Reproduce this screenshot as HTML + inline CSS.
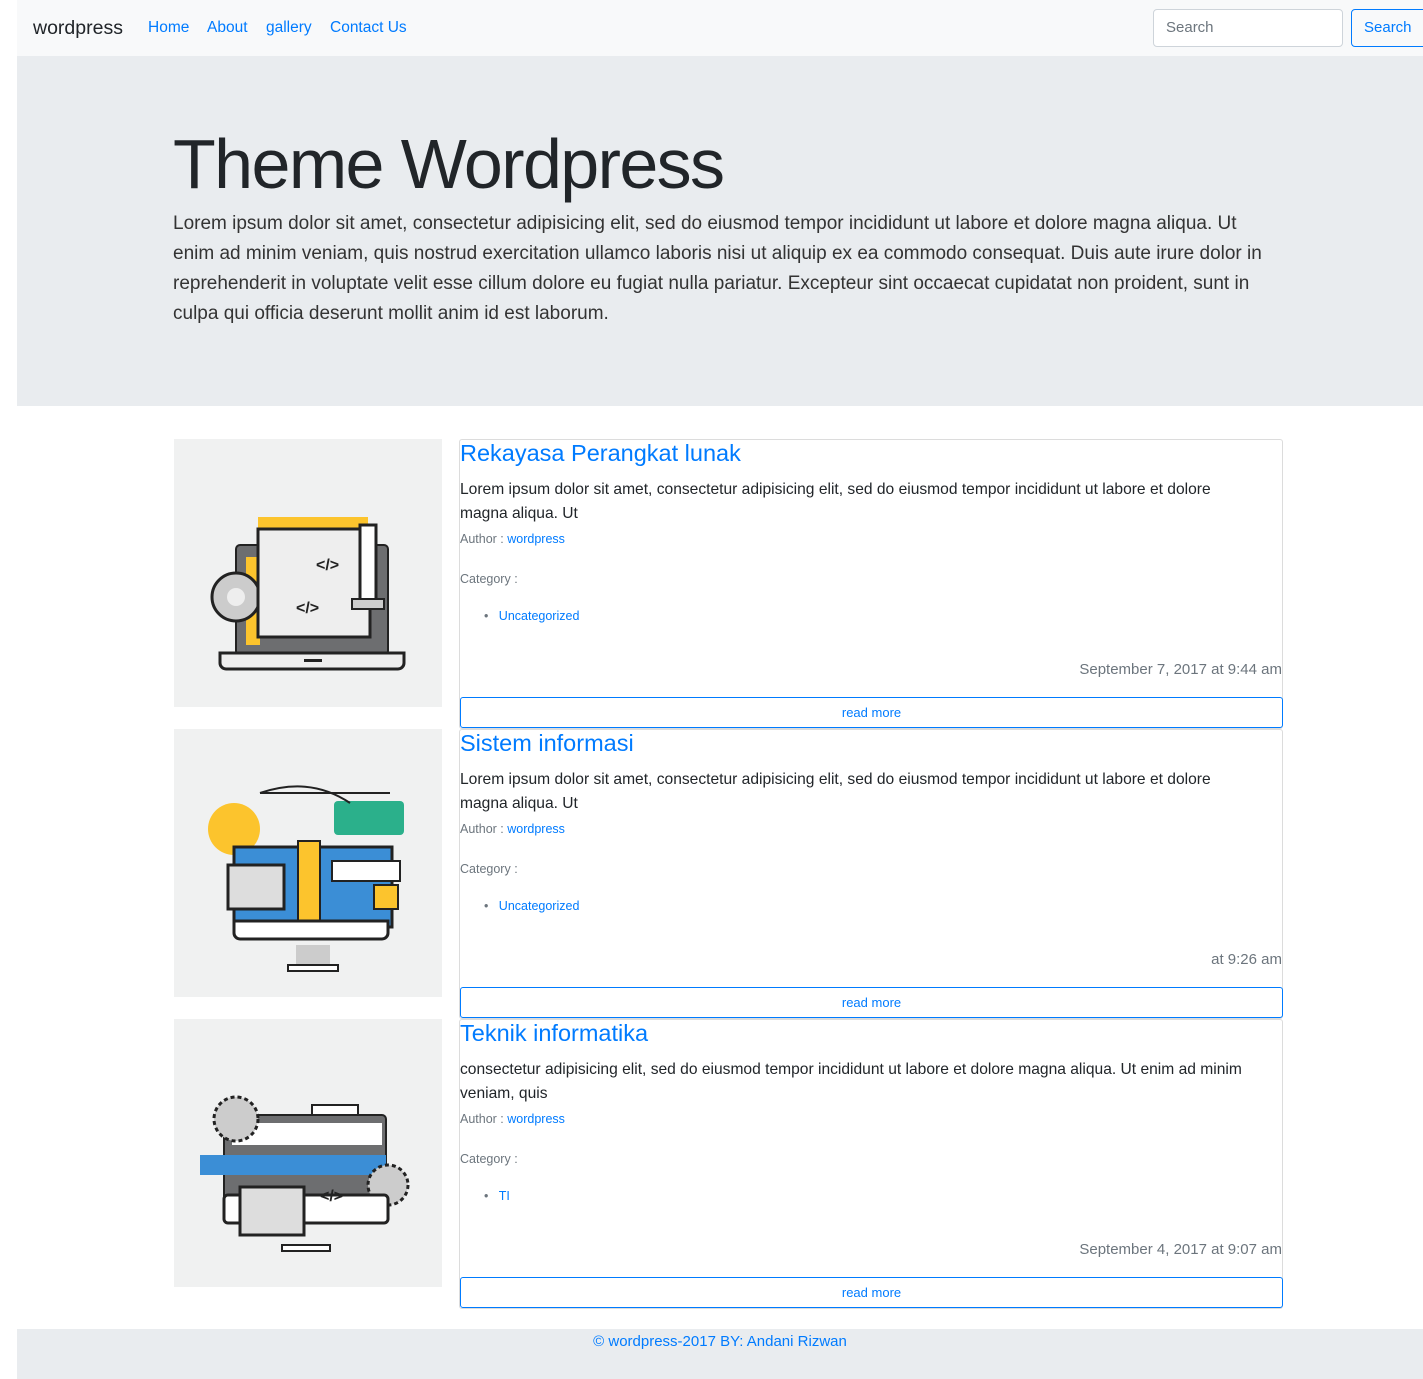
<!DOCTYPE html>
<html><head><style>
*{box-sizing:border-box;margin:0;padding:0}
body{width:1423px;height:1379px;background:#fff;font-family:"Liberation Sans",sans-serif;color:#212529;position:relative;overflow:hidden}
.a{position:absolute}
a{color:#007bff;text-decoration:none}
.nav{left:17px;top:0;width:1406px;height:56px;background:#f8f9fa}
.jum{left:17px;top:56px;width:1406px;height:350px;background:#e9ecef}
.img{background:#f0f1f1;width:268px;height:268px}
.card{border:1px solid #dcdcdc;border-radius:3px;width:824px}
.t{font-size:23.5px;color:#007bff}
.p{font-size:15.6px;line-height:24px}
.s{font-size:12.5px;color:#6c757d}
.d{font-size:15px;color:#6c757d;text-align:right;width:822px}
.btn{width:823px;height:31px;border:1px solid #007bff;border-radius:3px;color:#007bff;font-size:13px;text-align:center;line-height:29px}
.foot{left:17px;top:1329px;width:1406px;height:50px;background:#e9ecef;text-align:center;color:#007bff;font-size:15px;padding-top:4px}
</style></head><body>
<div class="a nav"></div>
<div class="a" style="left:33px;top:17px;font-size:19.5px">wordpress</div>
<div class="a" style="left:148px;top:19px;font-size:15.5px"><a>Home</a></div>
<div class="a" style="left:207px;top:19px;font-size:15.5px"><a>About</a></div>
<div class="a" style="left:266px;top:19px;font-size:15.5px"><a>gallery</a></div>
<div class="a" style="left:330px;top:19px;font-size:15.5px"><a>Contact Us</a></div>
<div class="a" style="left:1153px;top:9px;width:190px;height:38px;border:1px solid #ced4da;border-radius:4px;background:#fff;color:#6c757d;font-size:15px;padding:9px 12px">Search</div>
<div class="a" style="left:1351px;top:9px;width:80px;height:38px;border:1px solid #007bff;border-radius:4px;color:#007bff;font-size:15px;padding:9px 12px">Search</div>
<div class="a jum"></div>
<div class="a" style="left:173px;top:124px;font-size:70px;font-weight:300;color:#212529;letter-spacing:-1.6px">Theme Wordpress</div>
<div class="a" style="left:173px;top:209px;width:1100px;font-size:19px;line-height:30px;color:#333;font-weight:300">Lorem ipsum dolor sit amet, consectetur adipisicing elit, sed do eiusmod tempor incididunt ut labore et dolore magna aliqua. Ut enim ad minim veniam, quis nostrud exercitation ullamco laboris nisi ut aliquip ex ea commodo consequat. Duis aute irure dolor in reprehenderit in voluptate velit esse cillum dolore eu fugiat nulla pariatur. Excepteur sint occaecat cupidatat non proident, sunt in culpa qui officia deserunt mollit anim id est laborum.</div>

<!-- card 1 -->
<div class="a img" style="left:174px;top:439px"><svg width="268" height="268"><rect x="84" y="78" width="110" height="12" fill="#fcc42d"/><rect x="62" y="106" width="152" height="110" rx="4" fill="#6d6e70" stroke="#222" stroke-width="2"/><rect x="72" y="118" width="14" height="88" fill="#fcc42d"/><circle cx="62" cy="158" r="24" fill="#ccc" stroke="#222" stroke-width="3"/><circle cx="62" cy="158" r="9" fill="#eee"/><rect x="84" y="90" width="112" height="108" fill="#eee" stroke="#222" stroke-width="3"/><rect x="186" y="86" width="16" height="76" fill="#fff" stroke="#222" stroke-width="3"/><rect x="178" y="160" width="32" height="10" fill="#ccc" stroke="#222" stroke-width="2"/><text x="142" y="131" font-size="16" font-weight="bold" fill="#222">&lt;/&gt;</text><text x="122" y="174" font-size="16" font-weight="bold" fill="#222">&lt;/&gt;</text><path d="M46 214h184v10a6 6 0 0 1-6 6H52a6 6 0 0 1-6-6z" fill="#eee" stroke="#222" stroke-width="3"/><rect x="130" y="220" width="18" height="3" fill="#222"/></svg></div>
<div class="a card" style="left:459px;top:439px;height:290px"></div>
<div class="a t" style="left:460px;top:440px">Rekayasa Perangkat lunak</div>
<div class="a p" style="left:460px;top:478px;width:790px">Lorem ipsum dolor sit amet, consectetur adipisicing elit, sed do eiusmod tempor incididunt ut labore et dolore magna aliqua. Ut</div>
<div class="a s" style="left:460px;top:532px">Author : <a>wordpress</a></div>
<div class="a s" style="left:460px;top:572px">Category :</div>
<div class="a s" style="left:484px;top:609px">•&nbsp;&nbsp;&nbsp;<a>Uncategorized</a></div>
<div class="a d" style="left:460px;top:661px">September 7, 2017 at 9:44 am</div>
<div class="a btn" style="left:460px;top:697px">read more</div>

<!-- card 2 -->
<div class="a img" style="left:174px;top:729px"><svg width="268" height="268"><circle cx="60" cy="100" r="26" fill="#fcc42d"/><rect x="160" y="72" width="70" height="34" rx="4" fill="#2bb08b"/><path d="M86 64h130M86 64c30-10 60-10 90 10" stroke="#222" stroke-width="2" fill="none"/><rect x="60" y="118" width="158" height="80" fill="#3b8ed6" stroke="#222" stroke-width="3"/><rect x="124" y="112" width="22" height="80" fill="#fcc42d" stroke="#222" stroke-width="2"/><rect x="54" y="136" width="56" height="44" fill="#ddd" stroke="#222" stroke-width="3"/><rect x="158" y="132" width="68" height="20" fill="#fff" stroke="#222" stroke-width="2"/><rect x="200" y="156" width="24" height="24" fill="#fcc42d" stroke="#222" stroke-width="2"/><path d="M60 192h154v12a6 6 0 0 1-6 6H66a6 6 0 0 1-6-6z" fill="#fff" stroke="#222" stroke-width="3"/><rect x="122" y="216" width="34" height="20" fill="#ccc"/><rect x="114" y="236" width="50" height="6" fill="#fff" stroke="#222" stroke-width="2"/></svg></div>
<div class="a card" style="left:459px;top:729px;height:290px"></div>
<div class="a t" style="left:460px;top:730px">Sistem informasi</div>
<div class="a p" style="left:460px;top:768px;width:790px">Lorem ipsum dolor sit amet, consectetur adipisicing elit, sed do eiusmod tempor incididunt ut labore et dolore magna aliqua. Ut</div>
<div class="a s" style="left:460px;top:822px">Author : <a>wordpress</a></div>
<div class="a s" style="left:460px;top:862px">Category :</div>
<div class="a s" style="left:484px;top:899px">•&nbsp;&nbsp;&nbsp;<a>Uncategorized</a></div>
<div class="a d" style="left:460px;top:951px">at 9:26 am</div>
<div class="a btn" style="left:460px;top:987px">read more</div>

<!-- card 3 -->
<div class="a img" style="left:174px;top:1019px"><svg width="268" height="268"><rect x="138" y="86" width="46" height="16" fill="#fff" stroke="#222" stroke-width="2"/><rect x="50" y="96" width="162" height="90" rx="4" fill="#6d6e70" stroke="#222" stroke-width="2"/><rect x="58" y="104" width="150" height="22" fill="#fff"/><rect x="26" y="136" width="186" height="20" fill="#3b8ed6"/><circle cx="62" cy="100" r="22" fill="#ccc" stroke="#222" stroke-width="3" stroke-dasharray="4 3"/><circle cx="214" cy="166" r="20" fill="#ccc" stroke="#222" stroke-width="3" stroke-dasharray="4 3"/><rect x="50" y="176" width="164" height="28" rx="4" fill="#fff" stroke="#222" stroke-width="3"/><rect x="66" y="168" width="64" height="48" fill="#ddd" stroke="#222" stroke-width="3"/><text x="146" y="182" font-size="16" font-weight="bold" fill="#222">&lt;/&gt;</text><rect x="108" y="226" width="48" height="6" fill="#fff" stroke="#222" stroke-width="2"/></svg></div>
<div class="a card" style="left:459px;top:1019px;height:290px"></div>
<div class="a t" style="left:460px;top:1020px">Teknik informatika</div>
<div class="a p" style="left:460px;top:1058px;width:822px">consectetur adipisicing elit, sed do eiusmod tempor incididunt ut labore et dolore magna aliqua. Ut enim ad minim veniam, quis</div>
<div class="a s" style="left:460px;top:1112px">Author : <a>wordpress</a></div>
<div class="a s" style="left:460px;top:1152px">Category :</div>
<div class="a s" style="left:484px;top:1189px">•&nbsp;&nbsp;&nbsp;<a>TI</a></div>
<div class="a d" style="left:460px;top:1241px">September 4, 2017 at 9:07 am</div>
<div class="a btn" style="left:460px;top:1277px">read more</div>

<div class="a foot">© wordpress-2017 BY: Andani Rizwan</div>
</body></html>
